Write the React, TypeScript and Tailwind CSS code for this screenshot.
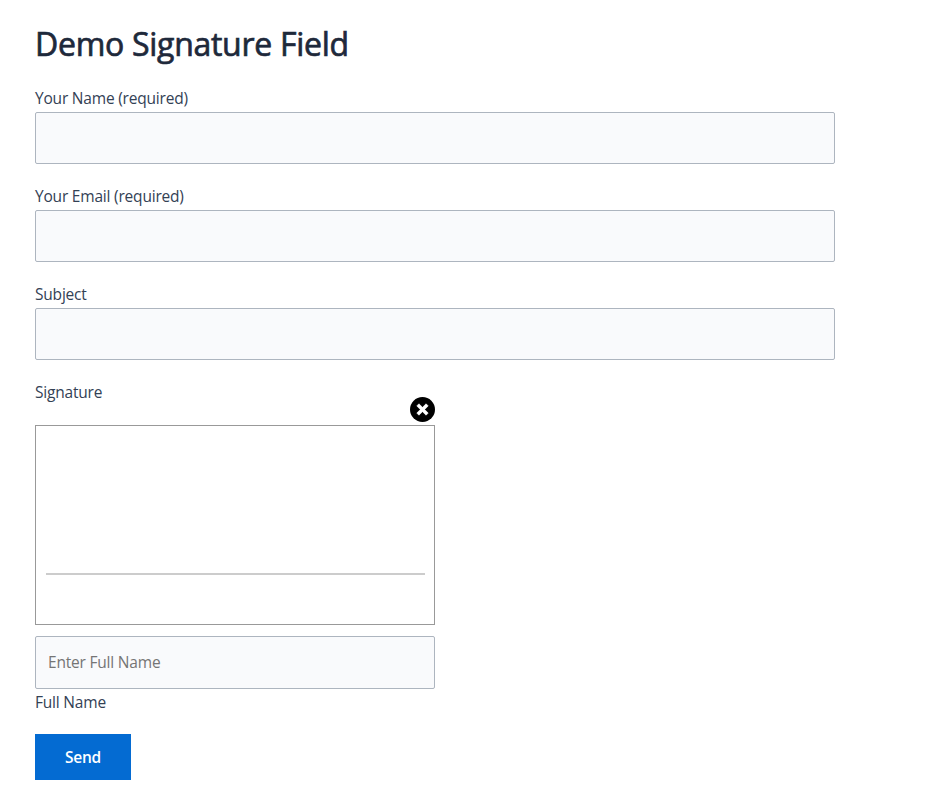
const inputClass =
  "block rounded-[2px] border border-[#adb5bf] bg-[#f9fafc] px-3 text-[15.5px] text-[#334155] outline-none placeholder:text-[#757575] placeholder:opacity-100";

function Field({ label, type = "text" }: { label: string; type?: string }) {
  return (
    <label className="mb-[22px] block">
      <span className="block h-6 leading-[20px]">{label}</span>
      <input type={type} className={`${inputClass} h-[52px] w-full`} />
    </label>
  );
}

function ClearIcon() {
  return (
    <svg width="25" height="25" viewBox="0 0 25 25" className="block">
      <circle cx="12.5" cy="12.5" r="12.5" fill="#000" />
      <path
        d="M8.9 6.8l3.6 3.5 3.6-3.5 2.1 2.1-3.5 3.6 3.5 3.6-2.1 2.1-3.6-3.5-3.6 3.5-2.1-2.1 3.5-3.6-3.5-3.6z"
        fill="#fff"
        stroke="#fff"
        strokeWidth="0.6"
        strokeLinejoin="round"
      />
    </svg>
  );
}

export default function App() {
  return (
    <main className="min-h-[801px] bg-white pl-[35px] pt-[22px] font-['Open_Sans','Noto_Sans',sans-serif] text-[15.5px] tracking-[-0.2px] text-[#334155]">
      <h1 className="mb-[22px] h-11 text-[32px] font-normal leading-[44px] tracking-[-0.28px] text-[#1e293b] [-webkit-text-stroke:0.7px_#1e293b]">
        Demo Signature Field
      </h1>
      <form className="w-[800px]" onSubmit={(e) => e.preventDefault()}>
        <Field label="Your Name (required)" />
        <Field label="Your Email (required)" type="email" />
        <Field label="Subject" />
        <div className="h-[15px] leading-[20px]">Signature</div>
        <div className="flex w-[400px] flex-col">
          <button type="button" aria-label="Clear signature" className="mb-[3px] self-end">
            <ClearIcon />
          </button>
          <div className="h-[200px] border border-[#999] px-[9.5px] pt-[147px]">
            <div className="h-[2px] bg-[#ccc]" />
          </div>
          <input
            placeholder="Enter Full Name"
            className={`${inputClass} mt-[11px] h-[53px] w-full pb-[2px]`}
          />
          <div className="h-[45px] leading-[27px]">Full Name</div>
        </div>
        <button type="submit" className="block h-[46px] w-24 bg-[#046bd2] pt-[2px] font-semibold text-white">
          Send
        </button>
      </form>
    </main>
  );
}
